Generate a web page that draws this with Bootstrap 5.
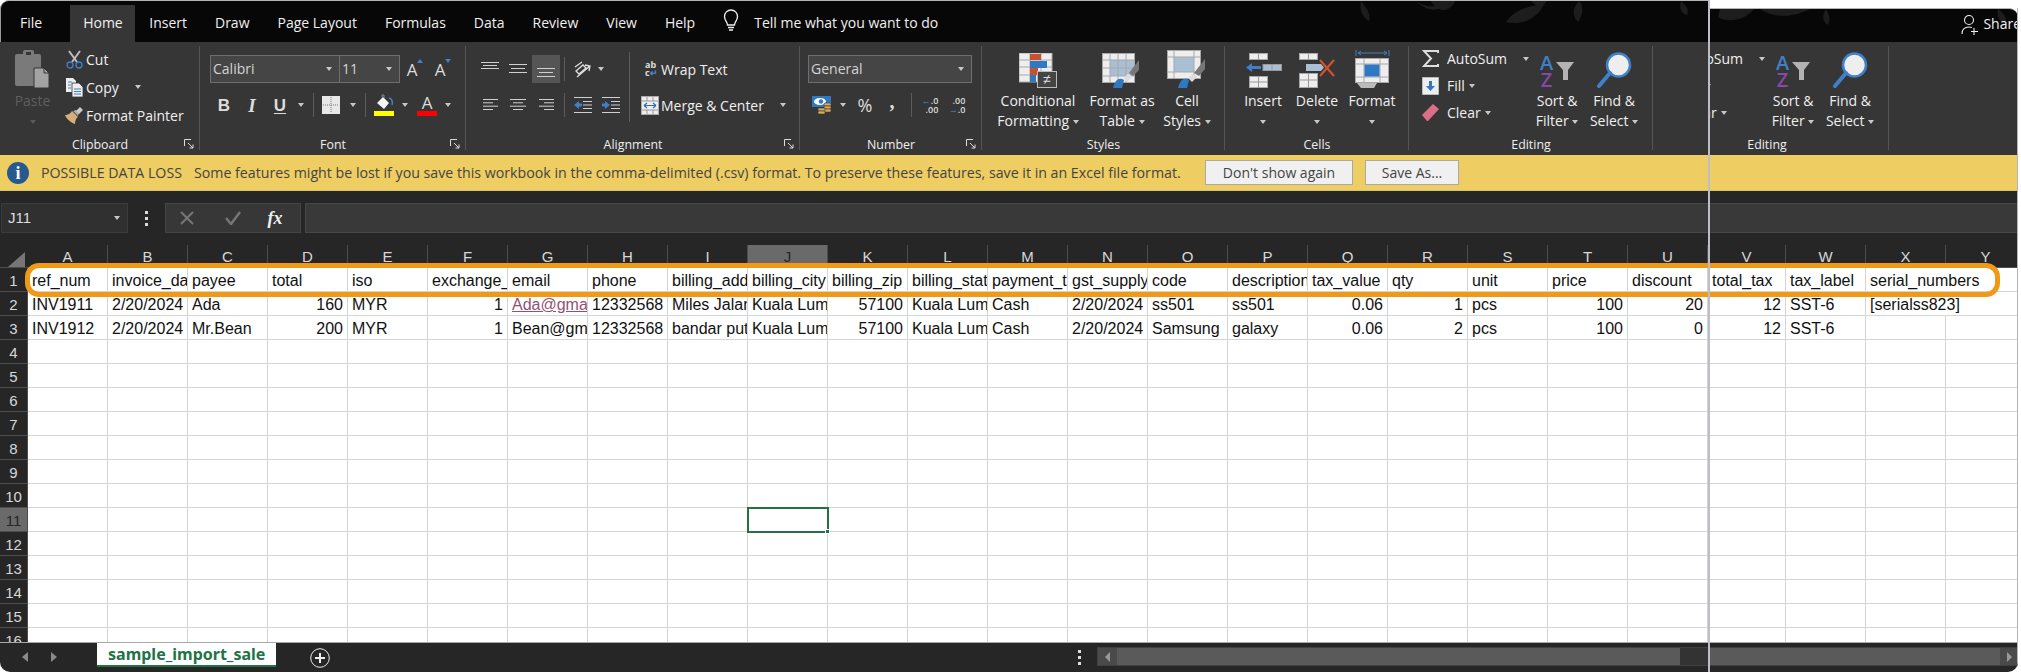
<!DOCTYPE html>
<html lang="en">
<head>
<meta charset="utf-8">
<title>sample_import_sale - Excel</title>
<link rel="stylesheet" href="https://cdn.jsdelivr.net/npm/bootstrap@5.3.0/dist/css/bootstrap.min.css">
<style>
html,body{margin:0;height:672px;overflow:hidden;background:#fff}
body{font-family:"Open Sans","Liberation Sans",sans-serif;font-size:14px;color:#f0f0f0}
.xw{position:relative;width:2018px;height:672px;overflow:hidden;border-bottom-left-radius:10px;border-bottom-right-radius:10px}
.xw svg{display:block;flex:none}
/* title strip */
.tabs-band{height:42px;background:#fff}
.tl{position:relative;width:1708px;height:42px;background:#070707;border-top:1px solid #b4b4b8;border-left:1px solid #9a9a9a;border-top-left-radius:9px;overflow:hidden;padding-left:19px}
.tr{position:relative;flex:1;margin-top:8px;height:34px;background:#070707;border-top:1px solid #b4b4b8;border-top-right-radius:9px;overflow:hidden}
.leaf{position:absolute;top:0;left:0}
.tb{height:37px;margin-top:4px;line-height:36px;padding:0 14px;font-size:14px;color:#f0f0f0;position:relative;white-space:nowrap}
.tb.f1{padding:0 28px 0 0}
.tb.on{background:#363636;padding:0 12.5px 0 13px}
.bulb{margin-left:13px;margin-top:8px;position:relative}
.tell{font-size:14px;margin-left:14px;margin-top:4px;line-height:36px;position:relative;white-space:nowrap}
.share{font-size:14px;position:relative;line-height:30px;margin-right:-3px}
.person{margin-top:5px;margin-right:4px;position:relative}
/* ribbon */
.rbn{height:113px;background:#363636}
.rleft{width:1708px;flex:none;overflow:hidden}
.rright{flex:1;overflow:hidden}
.shift{margin-left:-63px}
.rg{position:relative;flex:none;height:113px}
.rg::after{content:"";position:absolute;right:0;top:4px;bottom:5px;width:1px;background:#555}
.rb{height:94px}
.rl{height:18px;line-height:18px;text-align:center;font-size:12.4px;color:#eee}
.lau{position:absolute;right:6px;top:97px}
.g-clip{width:200px}.g-font{width:266px}.g-alg{width:334px}.g-num{width:182px}.g-sty{width:243px}.g-cell{width:184px}.g-edit{width:244px}
.rowh{height:28px}
.pt13{padding-top:13px}
.gap8{margin-top:8px}
.sl{flex:none;display:flex;align-items:center;justify-content:center;height:28px}
.s6{width:6px}.s8{width:8px}.s10{width:10px}.s12{width:12px}.s14{width:14px}.s16{width:16px}.s18{width:18px}.s20{width:20px}.s24{width:24px}.s26{width:26px}.s27{width:27px}.s28{width:28px}.s30{width:30px}.s31{width:31px}.s32{width:32px}.s34{width:34px}
.gx{flex:none}
.cr{display:inline-block;width:0;height:0;border-left:3.5px solid transparent;border-right:3.5px solid transparent;border-top:4px solid #c8c8c8;vertical-align:middle}
.vs{width:1px;height:24px;background:#5c5c5c}
.tall{flex:none;width:1px;height:70px;margin-top:10px;background:#5c5c5c}
.act{background:#555}
.combo{height:28px;background:#454545;border:1px solid #6e6e6e;font-size:14px;line-height:26px;padding-left:2px;color:#d4d4d4;display:flex;justify-content:space-between;align-items:center;padding-right:7px}
.cb1{width:130px}.cb2{width:60px;border-left:0}.cb3{width:164px}
.big{flex:none;display:flex;flex-direction:column;align-items:center;font-size:14px;line-height:20px;white-space:nowrap}
.bi{height:49px;display:flex;align-items:flex-end;justify-content:center;padding-bottom:3px}
.pastecol{width:62px;padding-left:3px}
.pastecol .txt{color:#5f5f5f}
.cr.dim{border-top-color:#5a5a5a}
.small3 .line{height:28px;display:flex;align-items:center;font-size:14px;white-space:nowrap}
.small3.ed .line{height:27px}
.ic{width:24px;flex:none;display:flex;justify-content:center}
.pd3{padding-top:3px}
.w-b1{width:88px}.w-b2{width:80px}.w-b3{width:50px}.w-c1{width:56px}.w-c2{width:52px}.w-c3{width:58px}
.pl10{padding-left:10px}.pl12{padding-left:12px}
.alg-left{width:163px;flex:none}
.alg-right{width:158px;flex:none;padding-left:1px}
.gA{font-size:17px;color:#ddd;line-height:1;position:relative}
.fmt{font-size:17px;font-weight:700;color:#ddd;line-height:1;font-family:"Liberation Sans",sans-serif}
.fmt.it{font-style:italic;font-family:"Liberation Serif",serif;font-weight:700;font-size:19px}
.fmt.un{text-decoration:underline;text-underline-offset:2px}
.pct{font-size:18px;color:#ddd;line-height:1}
.cma{font-size:20px;font-weight:700;color:#ddd;line-height:1;font-family:"Liberation Serif",serif;margin-top:-8px}
.dec{font-size:9px;line-height:9px;color:#ddd;font-weight:600;text-align:right}
.dec b{color:#4a8fd6;font-weight:700}
.wrapab{font-size:9px;line-height:8px;font-weight:700;color:#ddd;width:20px;margin-left:14px}
.wrapab i{font-style:normal;color:#4a8fd6}
.azA{font-size:20px;line-height:17px;color:#3f80c8;font-weight:600}
.azZ{font-size:20px;line-height:17px;color:#8549a8;font-weight:600}
.sortic{display:flex;align-items:flex-start;gap:3px}
/* message bar */
.msg{height:36px;background:#eecd62;color:#444;font-size:14.2px;padding-left:7px;border-bottom:1px solid #d9c26f}
.inf{width:22px;height:22px;border-radius:50%;background:#27598f;color:#fff;font-family:"Liberation Serif",serif;font-weight:700;font-size:18px;line-height:22px;text-align:center;flex:none}
.msg .hd{margin-left:12px;white-space:nowrap;width:143px;flex:none}
.msg .bd{margin-left:10px;white-space:nowrap;width:988px;flex:none}
.msg .btn{background:#f0f0f0;border:1px solid #a9a9a9;border-radius:0;height:25px;padding:0;color:#444;font-size:14px;line-height:23px;flex:none}
.b-dont{width:148px;margin-left:23px}
.b-save{width:94px;margin-left:12px}
/* formula */
.fbar{height:54px;background:#262626;padding-top:12px}
.nbox{width:127px;height:30px;background:#303030;border:1px solid #3b3b3b;margin-left:1px;font-family:"Liberation Sans",sans-serif;font-size:15px;line-height:28px;padding:0 7px 0 6px;color:#ddd;display:flex;justify-content:space-between;align-items:center}
.dots{width:37px;display:flex;justify-content:center;height:30px;align-items:center}
.fbtn{width:136px;height:30px;background:#373737;border:1px solid #444;display:flex;align-items:center;padding-left:14px}
.fx{font-family:"Liberation Serif",serif;font-style:italic;font-size:18px;font-weight:700;color:#eee;width:32px;text-align:center}
.finput{flex:1;height:30px;margin-left:4px;background:#393939;border:1px solid #474747;border-right:0}
/* sheet */
.sheetw{height:397px;overflow:hidden;position:relative;background:#fff}
.xsheet{table-layout:fixed;border-collapse:separate;border-spacing:0;width:1986px;font-family:"Liberation Sans",Arial,sans-serif;font-size:16px;color:#111}
.xsheet th{background:#262626;color:#d8d8d8;font-weight:400;text-align:center;padding:3px 0 0;border-right:1px solid #4d4d4d;border-bottom:1px solid #4d4d4d;font-size:15px;line-height:20px;height:24px}
.xsheet thead th{height:23px;line-height:20px;padding-top:2px}
.xsheet th.cor{border-right:0;position:relative}
.xsheet th.sel{background:#6a6a6a;color:#262626}
.xsheet td{height:24px;padding:3px 4px 0 4px;border-right:1px solid #d4d4d4;border-bottom:1px solid #d4d4d4;overflow:hidden;white-space:nowrap;line-height:20px}
.xsheet td.num{text-align:right}
.xsheet td.sp{overflow:visible;border-right-color:#fff}
.xsheet td.cur{position:relative;overflow:visible;outline:2px solid #217346;outline-offset:-1px}
.xsheet td.cur::after{content:"";position:absolute;right:-3px;bottom:-3px;width:5px;height:5px;background:#217346;border:1px solid #fff}
.xsheet a{color:#954f72}
.cort{position:absolute;left:8px;top:7px;width:0;height:0;border-bottom:15px solid #767676;border-left:17px solid transparent}
.ring{position:absolute;left:25px;top:18px;width:1975px;height:34px;border:5px solid #ef9a17;border-radius:14px;pointer-events:none}
.splice{position:absolute;left:1708px;top:0;bottom:0;width:2px;background:#bdbdc5;z-index:5}
.edge{position:absolute;right:0;top:8px;bottom:0;width:1px;background:#b4b4b8;z-index:4;border-bottom-right-radius:10px}
/* sheet tabs */
.stb{height:30px;background:#262626;border-top:1px solid #a8a8a8;color:#ddd}
.nav-ar{width:98px;display:flex;gap:23px;padding-top:9px;padding-left:22px}
.stab{width:180px;height:24px;background:#fff;border-bottom:2px solid #217346;color:#217346;font-weight:700;font-size:16px;line-height:22px;text-align:center;font-family:"Noto Sans","Open Sans",sans-serif;white-space:nowrap}
.addb{margin-left:34px;margin-top:5px}
.sp-dots{margin-left:748px;margin-top:7px}
.sbar{margin-left:16px;margin-top:4px;height:19px;background:#333;width:921px;border:1px solid #404040}
.sbtn{width:19px;background:#4a4a4a;display:flex;align-items:center;justify-content:center;flex:none}
.sth{background:#5a5a5a;flex:none}
.t1{width:563px}.t2{width:30px;background:#333}.t3{width:290px}
</style>
</head>
<body>
<div class="xw">

<div class="tabs-band d-flex">
  <div class="tl d-flex align-items-start">
    <svg class="leaf" width="1708" height="26" viewBox="0 0 1708 26"><g fill="#1d1d1d"><path d="M1360 0c6 8 10 12 8 20-6-4-10-10-8-20z"/><path d="M1415 0c8 6 20 8 30 0 0 6-14 16-30 0z"/><path d="M1505 21c8-12 22-16 38-18-6 14-22 22-38 18z"/><path d="M1578 0c5 6 4 14-1 21-6-6-6-14 1-21z"/><path d="M1530 0h16l-7 8z"/><path d="M1680 0c6 6 8 8 6 14-6-2-8-6-6-14z"/><path d="M1430 0h24c-4 10-16 14-24 0z"/></g></svg>
    <div class="tb f1">File</div>
    <div class="tb on">Home</div>
    <div class="tb">Insert</div>
    <div class="tb">Draw</div>
    <div class="tb">Page Layout</div>
    <div class="tb">Formulas</div>
    <div class="tb">Data</div>
    <div class="tb">Review</div>
    <div class="tb">View</div>
    <div class="tb">Help</div>
    <svg class="bulb" width="18" height="24" viewBox="0 0 18 24" fill="none" stroke="#f0f0f0" stroke-width="1.3"><path d="M5.500 16c0-3-3-4.500-3-8.500a6.500 6.500 0 0 1 13 0c0 4-3 5.500-3 8.500z"/><path d="M6 18.500h6M7 21h4"/></svg>
    <div class="tell">Tell me what you want to do</div>
  </div>
  <div class="tr d-flex justify-content-end align-items-start">
    <svg class="leaf" width="310" height="18" viewBox="0 0 310 18"><g fill="#1d1d1d"><path d="M10 8c10 6 26 4 36-8H12z"/><path d="M52 0c12 8 30 10 50 0z"/><path d="M118 0c4 6 4 12 2 16-6-4-6-10-2-16z"/><path d="M290 0c6 4 10 10 8 18-6-6-10-10-8-18z"/></g></svg>
    <svg class="person" width="18" height="22" viewBox="0 0 18 22" fill="none" stroke="#eee" stroke-width="1.100"><circle cx="8" cy="6" r="4.500"/><path d="M1 20c0-5 3-7 7-7 1 0 2 .2 3 .5M13 14v7M10 17.500h7"/></svg>
    <div class="share">Share</div>
  </div>
</div>

<div class="rbn d-flex">
 <div class="rleft d-flex">

  <!-- Clipboard -->
  <div class="rg g-clip">
   <div class="rb d-flex">
    <div class="big pastecol">
     <div class="bi"><svg width="35" height="38" viewBox="0 0 35 38"><path d="M2 4h6V2a2 2 0 0 1 2-2h7a2 2 0 0 1 2 2v2h5a2 2 0 0 1 2 2v28a2 2 0 0 1-2 2H2a2 2 0 0 1-2-2V6a2 2 0 0 1 2-2z" fill="#7a7a7a"/><path d="M11 2h5v3h-5z" fill="#363636"/><path d="M19 18h10l5 5v15H19z" fill="#a3a3a3" stroke="#363636"/><path d="M29 18v5h5" fill="none" stroke="#363636"/></svg></div>
     <div class="txt">Paste</div>
     <div><span class="cr dim"></span></div>
    </div>
    <div class="small3 pd3">
     <div class="line"><span class="ic"><svg width="17" height="19" viewBox="0 0 17 19" fill="none"><path d="M3 1l8 11M14 1L6 12" stroke="#bdbdbd" stroke-width="2"/><circle cx="4" cy="15" r="3" stroke="#3f80c8" stroke-width="1.300"/><circle cx="13" cy="15" r="3" stroke="#3f80c8" stroke-width="1.300"/></svg></span>Cut</div>
     <div class="line"><span class="ic"><svg width="17" height="19" viewBox="0 0 17 19"><path d="M0 0h7l3 3v11H0z" fill="#eee"/><path d="M6 5h7l4 4v10H6z" fill="#eee" stroke="#363636" stroke-width=".8"/><path d="M2 4h4M2 7h3M2 10h3M8 11h7M8 13.500h7M8 16h7" stroke="#3f80c8"/></svg></span>Copy <span class="cr ms-3"></span></div>
     <div class="line"><span class="ic"><svg width="18" height="17" viewBox="0 0 18 17"><path d="M0 8c3 0 6-2 7-4l6 6c-2 1-3 4-3 7-3-1-8-4-10-9z" fill="#d5ae7c"/><path d="M8 4l3-1 3 3-1 3z" fill="#aaa"/><path d="M11 4l4-4 3 3-4 4z" fill="#c9c9c9"/></svg></span>Format Painter</div>
    </div>
   </div>
   <div class="rl">Clipboard</div>
   <svg class="lau" width="10" height="10" viewBox="0 0 10 10" fill="none" stroke="#ddd"><path d="M.5 7V.5H7M4 4l5 5M9 5.500V9H5.500"/></svg>
  </div>

  <!-- Font -->
  <div class="rg g-font">
   <div class="rb pt13 pl10">
    <div class="d-flex rowh">
     <div class="combo cb1"><span>Calibri</span><span class="cr"></span></div>
     <div class="combo cb2"><span>11</span><span class="cr"></span></div>
     <div class="sl s30"><span class="gA">A</span><svg width="6" height="4" viewBox="0 0 6 4" class="mb-3"><path d="M0 4l3-4 3 4z" fill="#3f80c8"/></svg></div>
     <div class="sl s26"><span class="gA">A</span><svg width="6" height="4" viewBox="0 0 6 4" class="mb-3"><path d="M0 0l3 4 3-4z" fill="#3f80c8"/></svg></div>
    </div>
    <div class="d-flex rowh gap8">
     <div class="sl s28"><span class="fmt">B</span></div>
     <div class="sl s28"><span class="fmt it">I</span></div>
     <div class="sl s28"><span class="fmt un">U</span></div>
     <div class="sl s14"><span class="cr"></span></div>
     <div class="sl s10"><span class="vs"></span></div>
     <div class="sl s26"><svg width="18" height="18" viewBox="0 0 18 18"><rect width="18" height="18" fill="#e8e8e8"/><path d="M9 1v16M1 9h16" stroke="#777" stroke-dasharray="1 1"/></svg></div>
     <div class="sl s18"><span class="cr"></span></div>
     <div class="sl s6"><span class="vs"></span></div>
     <div class="sl s32"><svg width="20" height="22" viewBox="0 0 20 22"><path d="M3 9l6-6 6 6-5 6z" fill="#f5f5f5"/><path d="M8 3V1h2v3" stroke="#888" fill="none"/><path d="M15 4c3 1 4 3 3 7" stroke="#3f80c8" stroke-width="1.500" fill="none"/><rect y="17" width="20" height="5" fill="#ffff00"/></svg></div>
     <div class="sl s10"><span class="cr"></span></div>
     <div class="sl s34 flex-column"><span class="gA lh-1">A</span><svg width="20" height="5" viewBox="0 0 20 5"><rect width="20" height="5" fill="#f00"/></svg></div>
     <div class="sl s8"><span class="cr"></span></div>
    </div>
   </div>
   <div class="rl">Font</div>
   <svg class="lau" width="10" height="10" viewBox="0 0 10 10" fill="none" stroke="#ddd"><path d="M.5 7V.5H7M4 4l5 5M9 5.500V9H5.500"/></svg>
  </div>

  <!-- Alignment -->
  <div class="rg g-alg">
   <div class="rb d-flex">
    <div class="pt13 pl10 alg-left">
     <div class="d-flex rowh">
      <div class="sl s28"><svg width="18" height="14" viewBox="0 0 18 14" stroke="#d0d0d0"><path d="M0 .5h18M2 3.500h14M0 6.500h18"/></svg></div>
      <div class="sl s28"><svg width="18" height="12" viewBox="0 0 18 12" stroke="#d0d0d0"><path d="M0 1.500h18M2 5.500h14M0 9.500h18"/></svg></div>
      <div class="sl s28 act"><svg class="mt-2" width="18" height="12" viewBox="0 0 18 12" stroke="#d0d0d0"><path d="M0 1.500h18M2 5.500h14M0 9.500h18"/></svg></div>
      <div class="sl s8"><span class="vs"></span></div>
      <div class="sl s30"><svg width="18" height="17" viewBox="0 0 18 17" fill="none" stroke="#ddd" stroke-width="1.300"><path d="M1 6l7-5M2 10l7-6 3 3-7 6zM3 16L16 5M11 4l5 1-1 5"/></svg></div>
      <div class="sl s6"><span class="cr"></span></div>
     </div>
     <div class="d-flex rowh gap8">
      <div class="sl s28"><svg width="15" height="12" viewBox="0 0 15 12" stroke="#d0d0d0"><path d="M0 .5h15M0 3.800h10M0 7.200h15M0 10.500h10"/></svg></div>
      <div class="sl s28"><svg width="16" height="12" viewBox="0 0 16 12" stroke="#d0d0d0"><path d="M0 .5h16M3 3.800h10M0 7.200h16M3 10.500h10"/></svg></div>
      <div class="sl s28"><svg width="15" height="12" viewBox="0 0 15 12" stroke="#d0d0d0"><path d="M0 .5h15M5 3.800h10M0 7.200h15M5 10.500h10"/></svg></div>
      <div class="sl s8"><span class="vs"></span></div>
      <div class="sl s30"><svg width="18" height="16" viewBox="0 0 18 16"><path d="M0 .5h18M9 4.500h9M9 8h9M9 11.500h9M0 15.500h18" stroke="#d0d0d0"/><path d="M0 8l5-4v2.500h3v3H5V12z" fill="#3f80c8"/></svg></div>
      <div class="sl s26"><svg width="18" height="16" viewBox="0 0 18 16"><path d="M0 .5h18M9 4.500h9M9 8h9M9 11.500h9M0 15.500h18" stroke="#d0d0d0"/><path d="M8 8L3 4v2.500H0v3h3V12z" fill="#3f80c8"/></svg></div>
     </div>
    </div>
    <span class="tall"></span>
    <div class="pt13 alg-right">
     <div class="d-flex rowh align-items-center text-nowrap"><div class="sl s30"><div class="wrapab">ab<br>c<i>↵</i></div></div>Wrap Text</div>
     <div class="d-flex rowh gap8 align-items-center text-nowrap"><div class="sl s30"><svg class="ms-2" width="18" height="19" viewBox="0 0 18 19"><rect x=".5" y=".5" width="17" height="18" fill="#eee" stroke="#aaa"/><path d="M1 5h16M1 14h16M6 1v4M12 1v4M6 14v4M12 14v4" stroke="#999"/><path d="M3 9.500h12M3 9.500l3-2.500M3 9.500l3 2.500M15 9.500l-3-2.500M15 9.500l-3 2.500" stroke="#2a6fb5" stroke-width="1.200" fill="none"/></svg></div>Merge &amp; Center<span class="cr ms-3"></span></div>
    </div>
   </div>
   <div class="rl">Alignment</div>
   <svg class="lau" width="10" height="10" viewBox="0 0 10 10" fill="none" stroke="#ddd"><path d="M.5 7V.5H7M4 4l5 5M9 5.500V9H5.500"/></svg>
  </div>

  <!-- Number -->
  <div class="rg g-num">
   <div class="rb pt13">
    <div class="d-flex rowh ms-2">
     <div class="combo cb3"><span>General</span><span class="cr"></span></div>
    </div>
    <div class="d-flex rowh gap8 ms-2">
     <div class="sl s27"><svg width="20" height="19" viewBox="0 0 20 19"><rect width="19" height="11" fill="#2f78c4"/><ellipse cx="8" cy="5.500" rx="6" ry="3.500" fill="#fff"/><circle cx="9" cy="5.500" r="2.200" fill="#2f78c4"/><g fill="#d9a95c" stroke="#363636" stroke-width=".6"><rect x="12" y="7" width="7" height="3" rx="1"/><rect x="12" y="10" width="7" height="3" rx="1"/><rect x="12" y="13" width="7" height="3" rx="1"/><rect x="6" y="12" width="7" height="3" rx="1"/><rect x="6" y="15" width="7" height="3" rx="1"/></g></svg></div>
     <div class="sl s16"><span class="cr"></span></div>
     <div class="sl s28"><span class="pct">%</span></div>
     <div class="sl s26"><span class="cma">,</span></div>
     <div class="sl s12"><span class="vs"></span></div>
     <div class="sl s26"><div class="dec"><b>←</b>.0<br>.00</div></div>
     <div class="sl s28"><div class="dec">.00<br><b>→</b>.0</div></div>
    </div>
   </div>
   <div class="rl">Number</div>
   <svg class="lau" width="10" height="10" viewBox="0 0 10 10" fill="none" stroke="#ddd"><path d="M.5 7V.5H7M4 4l5 5M9 5.500V9H5.500"/></svg>
  </div>

  <!-- Styles -->
  <div class="rg g-sty">
   <div class="rb d-flex pl12">
    <div class="big w-b1">
     <div class="bi"><svg width="38" height="35" viewBox="0 0 38 35"><rect width="33" height="29" fill="#eee" stroke="#a8a8a8"/><path d="M11 0v29M22 0v29M0 7h33M0 14h33M0 22h33" stroke="#a8a8a8"/><rect x="11" y="1" width="11" height="6" fill="#c9502c"/><rect x="11" y="8" width="17" height="7" fill="#2f78c4"/><rect x="11" y="15" width="8" height="7" fill="#c9502c"/><rect x="11" y="22" width="6" height="7" fill="#2f78c4"/><rect x="18.500" y="18.500" width="19" height="16" fill="#444" stroke="#bbb"/><text x="28" y="31" font-size="14" fill="#ddd" text-anchor="middle" font-family="Liberation Sans">≠</text></svg></div>
     <div>Conditional</div><div>Formatting <span class="cr"></span></div>
    </div>
    <div class="big w-b2">
     <div class="bi"><svg width="40" height="35" viewBox="0 0 40 35"><rect x=".5" y=".5" width="32" height="29" fill="#eee" stroke="#a8a8a8"/><rect x="8" y="7" width="24" height="16" fill="#a9bfd3"/><path d="M8 1v29M16 1v29M24 1v29M1 7h32M1 15h32M1 23h32" stroke="#a8a8a8"/><path d="M11 35c2-8 6-11 11-8l-2 8z" fill="#2f78c4"/><path d="M22 26c1-3 3-5 5-5l3 3-5 5z" fill="#ddd"/><path d="M27 20l10-13v10l-6 6z" fill="#777"/></svg></div>
     <div>Format as</div><div>Table <span class="cr"></span></div>
    </div>
    <div class="big w-b3">
     <div class="bi"><svg width="40" height="38" viewBox="0 0 40 38"><rect x=".5" y=".5" width="33" height="28" fill="#eee" stroke="#a8a8a8"/><rect x="7" y="7" width="20" height="15" fill="#a9bfd3"/><path d="M7 1v28M27 1v28M1 7h32M1 22h32" stroke="#a8a8a8"/><path d="M11 38c2-8 6-11 11-8l-2 8z" fill="#2f78c4"/><path d="M22 29c1-3 3-5 5-5l3 3-5 5z" fill="#ddd"/><path d="M27 23l11-14v10l-6 7z" fill="#777"/></svg></div>
     <div>Cell</div><div>Styles <span class="cr"></span></div>
    </div>
   </div>
   <div class="rl">Styles</div>
  </div>

  <!-- Cells -->
  <div class="rg g-cell">
   <div class="rb d-flex pl10">
    <div class="big w-c1">
     <div class="bi"><svg width="37" height="35" viewBox="0 0 37 35"><g fill="#eee" stroke="#a8a8a8"><rect x="4.500" y=".5" width="18" height="6"/><rect x="4.500" y="23.500" width="18" height="11"/></g><rect x="18" y="11.500" width="18.500" height="6" fill="#a9bfd3" stroke="#999"/><path d="M27 12v6M13.500 1v6M13.500 24v11M5 29h18" stroke="#999"/><path d="M1 14.500l6-4.500v3h9v3H7v3z" fill="#3f80c8"/></svg></div>
     <div>Insert</div><div><span class="cr"></span></div>
    </div>
    <div class="big w-c2">
     <div class="bi"><svg width="37" height="35" viewBox="0 0 37 35"><g fill="#eee" stroke="#a8a8a8"><rect x=".5" y=".5" width="18" height="6"/><rect x=".5" y="20.500" width="18" height="14"/></g><path d="M9.500 1v6M9.500 21v14M1 27h18" stroke="#999"/><rect x="7" y="11" width="15" height="7" fill="#a9bfd3"/><path d="M22 11l3 3.500-3 3.500z" fill="#a9bfd3"/><path d="M21 23L35 7M21 7l14 16" stroke="#d2512e" stroke-width="2.200"/></svg></div>
     <div>Delete</div><div><span class="cr"></span></div>
    </div>
    <div class="big w-c3">
     <div class="bi"><svg width="35" height="38" viewBox="0 0 35 38"><path d="M1 0v6M34 0v6M3 3h29M3 3l3-2M3 3l3 2M32 3l-3-2M32 3l-3 2" stroke="#3f80c8" fill="none"/><rect x=".5" y="8.500" width="33" height="24" fill="#eee" stroke="#a8a8a8"/><path d="M9 9v24M25 9v24M1 14h33M1 27h33" stroke="#a8a8a8"/><rect x="9.500" y="14.500" width="15" height="12" fill="#2f78c4"/><path d="M2 33h20l-3 5H6z" fill="#bbb"/></svg></div>
     <div>Format</div><div><span class="cr"></span></div>
    </div>
   </div>
   <div class="rl">Cells</div>
  </div>

  <!-- Editing -->
  <div class="rg g-edit">
   <div class="rb d-flex">
    <div class="s10 flex-none"></div>
    <div class="small3 ed pd3">
     <div class="line"><span class="ic"><svg width="17" height="17" viewBox="0 0 17 17" fill="none" stroke="#ddd" stroke-width="2"><path d="M16 3V1H2l7 7.500L2 16h14v-2"/></svg></span><span class="ms-1">AutoSum</span><span class="cr ms-3"></span></div>
     <div class="line"><span class="ic"><svg width="17" height="18" viewBox="0 0 17 18"><rect width="17" height="18" fill="#eee" stroke="#888"/><path d="M8.500 14L4 9h3V4h3v5h3z" fill="#2f78c4"/></svg></span><span class="ms-1">Fill</span> <span class="cr ms-1"></span></div>
     <div class="line"><span class="ic"><svg width="17" height="17" viewBox="0 0 17 17"><path d="M0 11L11 0l6 5-11 12H5z" fill="#dc6e87"/></svg></span><span class="ms-1">Clear</span> <span class="cr ms-1"></span></div>
    </div>
    <div class="flex-grow-1"></div>
    <div class="big w-c1">
     <div class="bi"><div class="sortic"><div class="text-center"><div class="azA">A</div><div class="azZ">Z</div></div><svg class="mt-2" width="18" height="18" viewBox="0 0 18 18"><path d="M0 0h18l-6 8v10H7V8z" fill="#b3b3b3"/></svg></div></div>
     <div>Sort &amp;</div><div>Filter <span class="cr"></span></div>
    </div>
    <div class="big w-c3">
     <div class="bi"><svg width="35" height="36" viewBox="0 0 35 36"><circle cx="21.500" cy="13" r="11.500" fill="#eee" stroke="#3f80c8" stroke-width="2.500"/><path d="M13 21L2 34" stroke="#3f80c8" stroke-width="4" stroke-linecap="round"/></svg></div>
     <div>Find &amp;</div><div>Select <span class="cr"></span></div>
    </div>
    <div class="s10 flex-none"></div>
   </div>
   <div class="rl">Editing</div>
  </div>
 </div>

 <div class="rright">
  <div class="rg g-edit shift">
   <div class="rb d-flex">
    <div class="s10 flex-none"></div>
    <div class="small3 ed pd3">
     <div class="line"><span class="ic"></span><span class="ms-1">AutoSum</span><span class="cr ms-3"></span></div>
     <div class="line"><span class="ic"></span><span class="ms-1">Fill</span> <span class="cr ms-1"></span></div>
     <div class="line"><span class="ic"></span><span class="ms-1">Clear</span> <span class="cr ms-1"></span></div>
    </div>
    <div class="flex-grow-1"></div>
    <div class="big w-c1">
     <div class="bi"><div class="sortic"><div class="text-center"><div class="azA">A</div><div class="azZ">Z</div></div><svg class="mt-2" width="18" height="18" viewBox="0 0 18 18"><path d="M0 0h18l-6 8v10H7V8z" fill="#b3b3b3"/></svg></div></div>
     <div>Sort &amp;</div><div>Filter <span class="cr"></span></div>
    </div>
    <div class="big w-c3">
     <div class="bi"><svg width="35" height="36" viewBox="0 0 35 36"><circle cx="21.500" cy="13" r="11.500" fill="#eee" stroke="#3f80c8" stroke-width="2.500"/><path d="M13 21L2 34" stroke="#3f80c8" stroke-width="4" stroke-linecap="round"/></svg></div>
     <div>Find &amp;</div><div>Select <span class="cr"></span></div>
    </div>
    <div class="s10 flex-none"></div>
   </div>
   <div class="rl">Editing</div>
  </div>
 </div>
</div>

<div class="msg d-flex align-items-center">
  <div class="inf">i</div>
  <span class="hd">POSSIBLE DATA LOSS</span>
  <span class="bd">Some features might be lost if you save this workbook in the comma-delimited (.csv) format. To preserve these features, save it in an Excel file format.</span>
  <button type="button" class="btn b-dont">Don't show again</button>
  <button type="button" class="btn b-save">Save As...</button>
</div>

<div class="fbar d-flex align-items-start">
  <div class="nbox"><span>J11</span><span class="cr"></span></div>
  <div class="dots"><svg width="3" height="15" viewBox="0 0 3 15" fill="#ddd"><rect width="3" height="3"/><rect y="6" width="3" height="3"/><rect y="12" width="3" height="3"/></svg></div>
  <div class="fbtn">
    <svg width="14" height="14" viewBox="0 0 14 14" stroke="#767676" stroke-width="2" fill="none"><path d="M1 1l12 12M13 1L1 13"/></svg>
    <div class="s31 gx"></div>
    <svg width="16" height="14" viewBox="0 0 16 14" stroke="#767676" stroke-width="2.500" fill="none"><path d="M1 7l5 6L15 1"/></svg>
    <div class="s18 gx"></div>
    <div class="fx">fx</div>
  </div>
  <div class="finput"></div>
</div>

<div class="sheetw">
  <table class="xsheet" id="sheet"></table>
  <div class="cort"></div>
  <div class="ring"></div>
</div>

<div class="stb d-flex align-items-start">
  <div class="nav-ar">
    <svg width="6" height="10" viewBox="0 0 6 10"><path d="M6 0v10L0 5z" fill="#8a8a8a"/></svg>
    <svg width="6" height="10" viewBox="0 0 6 10"><path d="M0 0v10l6-5z" fill="#8a8a8a"/></svg>
  </div>
  <div class="stab">sample_import_sale</div>
  <svg class="addb" width="20" height="20" viewBox="0 0 20 20" fill="none" stroke="#eee"><circle cx="10" cy="10" r="9.300"/><path d="M10 5v10M5 10h10" stroke-width="2"/></svg>
  <svg class="sp-dots" width="3" height="15" viewBox="0 0 3 15" fill="#ddd"><rect width="3" height="3"/><rect y="6" width="3" height="3"/><rect y="12" width="3" height="3"/></svg>
  <div class="sbar d-flex">
    <div class="sbtn"><svg width="5" height="10" viewBox="0 0 5 10"><path d="M5 0v10L0 5z" fill="#999"/></svg></div>
    <div class="sth t1"></div>
    <div class="sth t2"></div>
    <div class="sth t3"></div>
    <div class="flex-grow-1"></div>
    <div class="sbtn"><svg width="5" height="10" viewBox="0 0 5 10"><path d="M0 0v10l5-5z" fill="#999"/></svg></div>
  </div>
</div>

<div class="splice"></div>
<div class="edge"></div>
</div>

<script src="https://cdn.jsdelivr.net/npm/bootstrap@5.3.0/dist/js/bootstrap.bundle.min.js"></script>
<script>
var L="A B C D E F G H I J K L M N O P Q R S T U V W X Y".split(" ");
var R=[
["ref_num","invoice_date","payee","total","iso","exchange_rate","email","phone","billing_address","billing_city","billing_zip","billing_state","payment_type","gst_supply_date","code","description","tax_value","qty","unit","price","discount","total_tax","tax_label","serial_numbers",""],
["INV1911","2/20/2024","Ada","#160","MYR","#1","@Ada@gmail.com","12332568","Miles Jalan Klang","Kuala Lumpur","#57100","Kuala Lumpur","Cash","2/20/2024","ss501","ss501","#0.06","#1","pcs","#100","#20","#12","SST-6","[serialss823]",""],
["INV1912","2/20/2024","Mr.Bean","#200","MYR","#1","Bean@gmail.com","12332568","bandar puteri","Kuala Lumpur","#57100","Kuala Lumpur","Cash","2/20/2024","Samsung","galaxy","#0.06","#2","pcs","#100","#0","#12","SST-6","",""]];
var h="<colgroup><col style='width:28px'>";
L.forEach(function(_,i){h+="<col style='width:"+(i==21?78:80)+"px'>"});
h+="</colgroup><thead><tr><th class='cor'></th>";
L.forEach(function(c){h+="<th"+(c=="J"?" class='sel'":"")+">"+c+"</th>"});
h+="</tr></thead><tbody>";
for(var r=0;r<16;r++){
  h+="<tr><th"+(r==10?" class='sel'":"")+">"+(r+1)+"</th>";
  for(var c=0;c<25;c++){
    var v=r<3?R[r][c]:"",k=[];
    if(v[0]=="#"){k.push("num");v=v.slice(1)}
    if(v[0]=="@"){v="<a href='#'>"+v.slice(1)+"</a>"}
    if(r<2&&c==23)k.push("sp");
    if(r==10&&c==9)k.push("cur");
    h+="<td class='"+k.join(" ")+"'>"+v+"</td>";
  }
  h+="</tr>";
}
document.getElementById("sheet").innerHTML=h+"</tbody>";
</script>
</body>
</html>
